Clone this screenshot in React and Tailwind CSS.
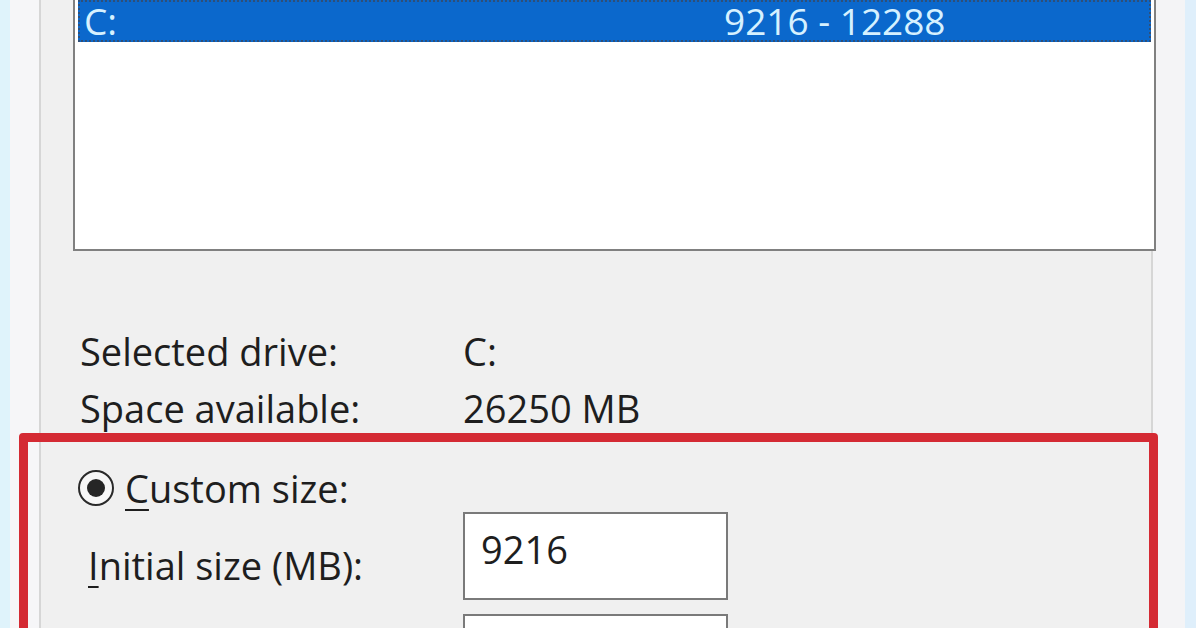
export default function App() {
  const font = { fontFamily: '"Open Sans", "Noto Sans", sans-serif' };
  return (
    <div
      className="relative flex h-[628px] w-[1196px] overflow-hidden bg-[#f0f0f0] text-[#1e1e1e]"
      style={font}
    >
      {/* left gutter */}
      <div className="w-[10px] shrink-0 bg-[#dff3fb]" />
      <div className="w-[29px] shrink-0 bg-[#f6f6f8]" />
      <div className="w-[2px] shrink-0 bg-[#d6d6d6]" />

      {/* main panel */}
      <div className="relative flex w-[1110px] shrink-0 flex-col bg-[#f0f0f0]">
        {/* list box */}
        <div className="relative z-10 ml-[32px] h-[251px] w-[1083px] shrink-0 border-x-2 border-b-2 border-[#808080] bg-white">
          <div className="mx-[3px] flex h-[42px] items-center border-2 border-dotted border-[#2f4f78] bg-[#0b68cc] text-[37px] leading-[40px] text-[#d6f1ff]">
            <span className="w-[644px] pl-[4px]">C:</span>
            <span>9216 - 12288</span>
          </div>
        </div>

        {/* info rows */}
        <div className="ml-[39px] mt-[71px] flex shrink-0 flex-col text-[38px]">
          <div className="flex h-[57px] items-center leading-[46px]">
            <span className="w-[383px]">Selected drive:</span>
            <span>C:</span>
          </div>
          <div className="flex h-[57px] items-center leading-[46px]">
            <span className="w-[383px]">Space available:</span>
            <span>26250 MB</span>
          </div>
        </div>

        {/* custom size */}
        <div className="ml-[37px] mt-[29px] flex h-[46px] shrink-0 items-center gap-[11px] text-[38px] leading-[46px]">
          <span className="flex h-[36px] w-[36px] shrink-0 items-center justify-center rounded-full border-[2.5px] border-[#2a2a2a] bg-[#f7f7f7]">
            <span className="h-[18px] w-[18px] rounded-full bg-[#262626]" />
          </span>
          <span>
            <span className="underline decoration-[2px] underline-offset-[6px]">C</span>ustom size:
          </span>
        </div>

        <div className="ml-[47px] mt-[1px] flex shrink-0 items-start text-[38px]">
          <span className="w-[375px] pt-[30px] leading-[46px]">
            <span className="underline decoration-[2px] underline-offset-[6px]">I</span>nitial size (MB):
          </span>
          <div className="flex flex-col">
            <div className="flex h-[88px] w-[265px] shrink-0 items-start border-2 border-[#7a7a7a] bg-white pl-[16px] pt-[12px] leading-[46px]">
              9216
            </div>
            <div className="mt-[14px] h-[60px] w-[265px] shrink-0 border-2 border-[#7a7a7a] bg-white" />
          </div>
        </div>
      </div>

      {/* right gutter */}
      <div className="w-[2px] shrink-0 bg-[#d6d6d6]" />
      <div className="w-[32px] shrink-0 bg-[#f4f4f6]" />
      <div className="flex-1 bg-[#dfeffb]" />

      {/* red annotation frame */}
      <div className="pointer-events-none absolute left-[19px] top-[433px] z-20 h-[240px] w-[1139px] rounded-[4px] border-[9px] border-[#d42a33]" />
    </div>
  );
}
